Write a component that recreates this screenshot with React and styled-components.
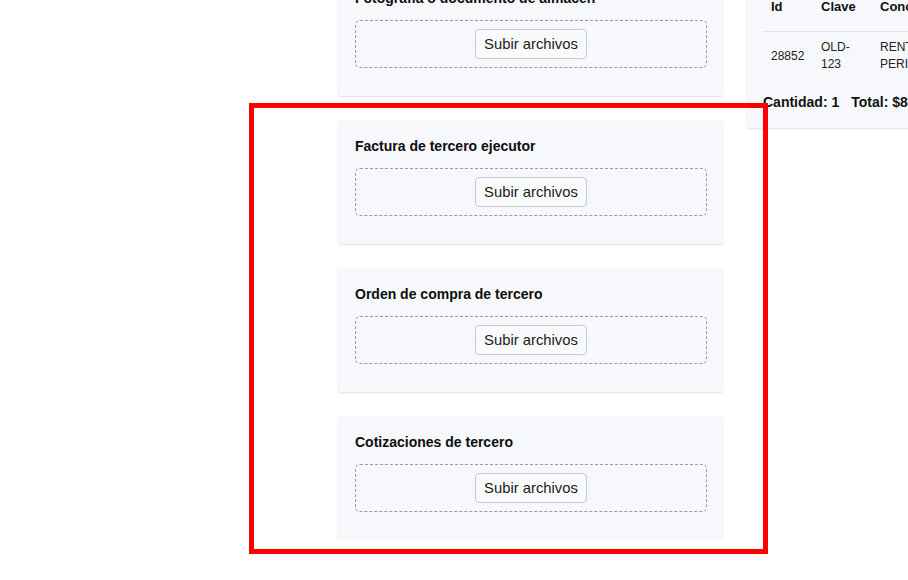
import React from "react";
import styled, { createGlobalStyle } from "styled-components";

const GlobalStyle = createGlobalStyle`
  html, body {
    margin: 0;
    padding: 0;
    background: #ffffff;
    overflow: hidden;
  }
  body {
    font-family: "Liberation Sans", Arial, Helvetica, sans-serif;
    color: #111111;
  }
`;

const uploads = [
  { id: 0, name: "Fotografía o documento de almacén" },
  { id: 1, name: "Factura de tercero ejecutor" },
  { id: 2, name: "Orden de compra de tercero" },
  { id: 3, name: "Cotizaciones de tercero" },
];

const items = [
  { id: 28852, clave: "OLD-123", concepto: "RENTA PERIÓDICA", cantidad: 1, precio: "$850.00", importe: "$850.00" },
];

const App = () => {
  return (
    <>
      <GlobalStyle />
      <Page>
        <Column>
          {uploads.map((u) => (
            <Card key={u.id}>
              <CardTitle>{u.name}</CardTitle>
              <DropZone>
                <UploadButton type="button">Subir archivos</UploadButton>
              </DropZone>
            </Card>
          ))}
        </Column>
        <Side>
          <SummaryCard>
            <Table>
              <colgroup>
                <col style={{ width: 50 }} />
                <col style={{ width: 59 }} />
                <col style={{ width: 90 }} />
                <col style={{ width: 70 }} />
                <col style={{ width: 70 }} />
                <col style={{ width: 70 }} />
              </colgroup>
              <thead>
                <tr>
                  <Th>Id</Th>
                  <Th>Clave</Th>
                  <Th>Concepto</Th>
                  <Th>Cantidad</Th>
                  <Th>Precio</Th>
                  <Th>Importe</Th>
                </tr>
              </thead>
              <tbody>
                {items.map((it) => (
                  <tr key={it.id}>
                    <Td>{it.id}</Td>
                    <Td>{it.clave}</Td>
                    <Td>{it.concepto}</Td>
                    <Td>{it.cantidad}</Td>
                    <Td>{it.precio}</Td>
                    <Td>{it.importe}</Td>
                  </tr>
                ))}
              </tbody>
            </Table>
            <Totals>
              <span>Cantidad: 1</span>
              <span>Total: $850.00</span>
            </Totals>
          </SummaryCard>
        </Side>
      </Page>
      <Highlight />
    </>
  );
};

export default App;

const Page = styled.div`
  display: flex;
  align-items: flex-start;
  gap: 24px;
  margin-top: -28px;
  padding-left: 338px;
`;

const Column = styled.div`
  display: flex;
  flex-direction: column;
  gap: 24px;
  width: 385px;
  flex-shrink: 0;
`;

const Card = styled.div`
  box-sizing: border-box;
  background: #f7f8fc;
  border-radius: 2px;
  box-shadow: 0 1px 2px rgba(0, 0, 0, 0.12);
  padding: 16px 16px 28px 17px;
`;

const CardTitle = styled.h3`
  margin: 0 0 12px;
  font-size: 14px;
  line-height: 20px;
  font-weight: bold;
  color: #0d0d0d;
`;

const DropZone = styled.div`
  box-sizing: border-box;
  height: 48px;
  display: flex;
  align-items: center;
  justify-content: center;
  border: 1px dashed #9a9aa2;
  border-radius: 5px;
`;

const UploadButton = styled.button`
  box-sizing: border-box;
  width: 112px;
  height: 30px;
  padding: 0;
  font-family: "Liberation Sans", Arial, sans-serif;
  font-size: 14.8px;
  color: #1a1a1a;
  background: #f9fafc;
  border: 1px solid #c9cacf;
  border-radius: 4px;
`;

const Side = styled.div`
  flex-shrink: 0;
  width: 420px;
`;

const SummaryCard = styled.div`
  background: #f7f8fc;
  border-radius: 2px;
  box-shadow: 0 1px 2px rgba(0, 0, 0, 0.12);
  padding: 16px 16px 18px;
`;

const Table = styled.table`
  border-collapse: collapse;
  table-layout: fixed;
  width: 409px;
`;

const Th = styled.th`
  text-align: left;
  font-size: 13px;
  line-height: 16px;
  font-weight: bold;
  color: #111111;
  padding: 11px 8px 16px;
  border-bottom: 1px solid #e2e3e8;
`;

const Td = styled.td`
  font-size: 12px;
  line-height: 17px;
  color: #222222;
  padding: 7px 8px;
  vertical-align: middle;
  word-wrap: break-word;
`;

const Totals = styled.div`
  display: flex;
  gap: 12px;
  margin-top: 14px;
  font-size: 14px;
  line-height: 16px;
  font-weight: bold;
  color: #111111;
  white-space: nowrap;
`;

const Highlight = styled.div`
  position: absolute;
  left: 249px;
  top: 103px;
  width: 519px;
  height: 451px;
  box-sizing: border-box;
  border: 5px solid #ff0000;
  pointer-events: none;
`;
